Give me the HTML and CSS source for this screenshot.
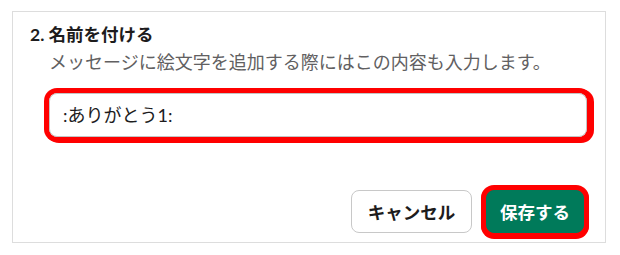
FILE: index.html
```html
<!DOCTYPE html>
<html lang="ja">
<head>
<meta charset="utf-8">
<link rel="stylesheet" href="styles.css">
</head>
<body>
<div class="panel">
  <div class="title">2. 名前を付ける</div>
  <div class="hint">メッセージに絵文字を追加する際にはこの内容も入力します。</div>
  <div class="input">:ありがとう1:</div>
  <div class="actions">
    <button class="btn cancel">キャンセル</button>
    <button class="btn save">保存する</button>
  </div>
</div>
</body>
</html>
```

FILE: styles.css
```css
html, body {
  margin: 0;
  background: #ffffff;
}
body {
  padding: 11px 0 0 12px;
  font-family: Lato, "Noto Sans CJK JP", sans-serif;
  color: #1d1c1d;
}
.panel {
  box-sizing: border-box;
  width: 594px;
  height: 232px;
  border: 1px solid #dddddd;
  padding: 11px 21px 9px 17px;
  display: flex;
  flex-direction: column;
}
.title {
  font-size: 17.5px;
  font-weight: 700;
  line-height: 24px;
  height: 24px;
}
.hint {
  margin: 2px 0 0 19px;
  font-size: 18px;
  line-height: 26px;
  height: 26px;
  color: #616061;
  white-space: nowrap;
}
.input {
  box-sizing: border-box;
  margin: 18px 0 0 19px;
  width: 538px;
  height: 44px;
  border: 1px solid #c4c4c4;
  border-radius: 8px;
  padding-left: 13px;
  font-size: 18px;
  line-height: 42px;
  color: #1d1c1d;
  box-shadow: 0 0 0 5px #ff0000, 2px 1px 0 5px #ff0000;
}
.actions {
  margin-top: 53px;
  display: flex;
  justify-content: flex-end;
  gap: 14px;
}
.btn {
  box-sizing: border-box;
  height: 43px;
  border-radius: 8px;
  font-family: Lato, "Noto Sans CJK JP", sans-serif;
  font-size: 17.5px;
  font-weight: 700;
  padding: 0;
  cursor: pointer;
}
.cancel {
  width: 121px;
  background: #ffffff;
  border: 1px solid #c8c8c8;
  color: #1d1c1d;
}
.save {
  width: 98px;
  background: #007a5a;
  border: 1px solid #007a5a;
  color: #ffffff;
  box-shadow: 0 0 0 5px #ff0000, 0 1px 0 5px #ff0000;
}
```
